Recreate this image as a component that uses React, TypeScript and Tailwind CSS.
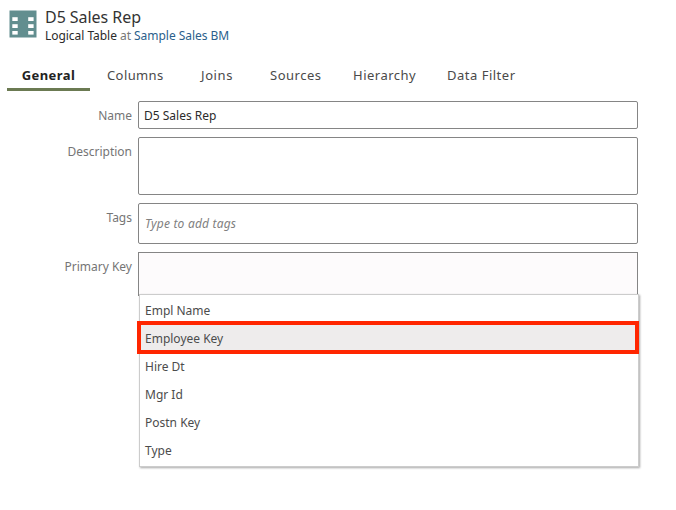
import type { ReactNode } from "react";

const tabs = [
  { label: "General", cls: "w-[83px] justify-center border-b-[3px] border-[#6b7a52] font-bold text-[#222] tracking-[0.4px]" },
  { label: "Columns", cls: "ml-[17px] w-[94px] tracking-[0.4px]" },
  { label: "Joins", cls: "w-[69px] tracking-[0.6px]" },
  { label: "Sources", cls: "w-[83px] tracking-[0.5px]" },
  { label: "Hierarchy", cls: "w-[94px] tracking-[0.5px]" },
  { label: "Data Filter", cls: "w-[80px] tracking-[0.5px]" },
];

const options = ["Empl Name", "Employee Key", "Hire Dt", "Mgr Id", "Postn Key", "Type"];

function Field({ label, children }: { label: string; children: ReactNode }) {
  return (
    <div className="flex items-start">
      <label className="w-[132px] shrink-0 pt-[6px] text-right leading-[18px] text-[#757575]">{label}</label>
      <div className="ml-[6px] w-[500px]">{children}</div>
    </div>
  );
}

function TableIcon() {
  return (
    <svg className="mt-[10px] ml-[9px] h-[28px] w-[28px]" viewBox="0 0 28 28">
      <rect x="0.5" y="0.5" width="27" height="27" fill="#628e8f" />
      <g fill="#fff">
        <rect x="3.3" y="7.2" width="5.4" height="3.8" />
        <rect x="3.3" y="14.2" width="5.4" height="3.8" />
        <rect x="3.3" y="21" width="5.4" height="3.6" />
        <rect x="19.2" y="7.2" width="5.4" height="3.8" />
        <rect x="19.2" y="14.2" width="5.4" height="3.8" />
        <rect x="19.2" y="21" width="5.4" height="3.6" />
      </g>
    </svg>
  );
}

export default function App() {
  return (
    <div className="h-[510px] w-[676px] overflow-hidden bg-white font-['Noto_Sans','Open_Sans',sans-serif] text-[12px]">
      <header className="flex h-[60px]">
        <TableIcon />
        <div className="ml-[8px] pt-[7px]">
          <h1 className="h-[20px] text-[16px] leading-[20px] tracking-[-0.05px] text-[#333]">D5 Sales Rep</h1>
          <p className="text-[12px] leading-[18px] tracking-[-0.04px] text-[#2b2b2b]">
            Logical Table <span className="text-[#777]">at</span> <span className="text-[#2b5f8c]">Sample Sales BM</span>
          </p>
        </div>
      </header>
      <nav className="ml-[7px] flex h-[31px] text-[13px] leading-[30px] text-[#4a4a4a]">
        {tabs.map((t) => (
          <div key={t.label} className={`flex shrink-0 whitespace-nowrap ${t.cls}`}>{t.label}</div>
        ))}
      </nav>
      <main className="mt-[10px] flex flex-col gap-[8px]">
        <Field label="Name">
          <div className="h-[28px] rounded-[2px] border border-[#858585] pl-[5px] leading-[28px] text-[#2b2b2b]">D5 Sales Rep</div>
        </Field>
        <Field label="Description">
          <div className="h-[58px] rounded-[2px] border border-[#858585]" />
        </Field>
        <Field label="Tags">
          <div className="h-[41px] rounded-[2px] border border-[#858585] pl-[6px] leading-[40px] tracking-[0.2px] text-[#808080] italic">Type to add tags</div>
        </Field>
        <Field label="Primary Key">
          <div className="relative h-[44px] border border-b-0 border-[#858585] bg-[#fdfbfc]">
            <ul className="absolute top-[41px] left-0 h-[173px] w-[500px] border border-[#ccc] bg-white pt-[2px] text-[#4c4c4c] shadow-[1px_1px_2px_rgba(0,0,0,0.35)]">
              {options.map((o) => (
                <li key={o} className="relative h-[28px] pl-[5px] leading-[28px]">
                  {o === "Employee Key" && (
                    <span className="absolute -top-[4px] -left-[3px] h-[33px] w-[502px] border-4 border-[#ff2600] bg-[#eeecec]" />
                  )}
                  <span className="relative">{o}</span>
                </li>
              ))}
            </ul>
          </div>
        </Field>
      </main>
    </div>
  );
}
